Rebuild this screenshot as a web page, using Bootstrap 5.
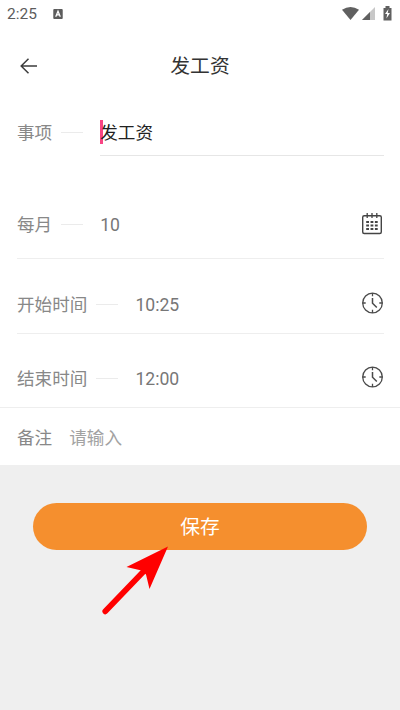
<!DOCTYPE html>
<html lang="zh-CN">
<head>
<meta charset="utf-8">
<meta name="viewport" content="width=device-width, initial-scale=1">
<title>发工资</title>
<link href="https://cdn.jsdelivr.net/npm/bootstrap@5.3.0/dist/css/bootstrap.min.css" rel="stylesheet">
<style>
body{font-family:Roboto,"Noto Sans CJK SC",sans-serif;font-size:17.6px;line-height:26px;color:#777;background:#efefef;height:710px;overflow:hidden}
.status-bar{height:28px;font-size:15.5px;color:#5c5c5c;padding:0 7px}
.title-bar{height:76px;padding:0 20px}
.title-bar h1{font-size:19.8px;line-height:28px;color:#333;padding-top:2px}
.form-line{padding:0 16px 0 17px;border-bottom:1px solid #eee}
.field-name{color:#888}
.field-name,.field-value,.hint{padding-top:2px}
.dash{width:22px;height:1px;background:#ebebeb;margin:0 17px 0 9px}
.row-event{height:86px;padding:5px 16px 0 17px}
.event-label{height:46px}
.event-input{height:47px;border-bottom:1px solid #e6e6e6;color:#222}
.caret{width:2.5px;height:24px;background:#f94585;margin-right:-2.5px}
.row-month{height:69px;margin:0 16px 0 17px;padding:0}
.row-start{height:75px;margin:0 16px 0 17px;padding:16px 0 0}
.row-end{height:74px;padding-top:15px}
.clock-icon{margin-bottom:2px}
.row-note{height:57px;padding:0 17px}
.hint{color:#a2a2a2;margin-left:17px}
.save-area{padding:38px 33px 0}
.btn-save{--bs-btn-bg:#f58f2e;--bs-btn-color:#fff;--bs-btn-hover-bg:#e98220;--bs-btn-hover-color:#fff;height:47px;font-size:19.8px;line-height:28px;border:0;padding:2px 0 0}
.pointer{left:102px;top:545px}
</style>
<script src="https://cdn.jsdelivr.net/npm/bootstrap@5.3.0/dist/js/bootstrap.bundle.min.js" defer></script>
</head>
<body>
<svg class="d-none">
<symbol id="clock" viewBox="0 0 22 22"><g fill="none" stroke="#4a4a4a" stroke-width="1.3"><circle cx="11" cy="11" r="9.8"/><path d="M11 1v3.2M11 17.8v3.2M1 11h3.2M17.8 11h3.2"/><path d="M11 6v5.2l4.3 4.3" stroke-width="1.5"/></g></symbol>
</svg>
<main class="bg-white">
<div class="status-bar d-flex align-items-center">
<span>2:25</span>
<svg class="ms-3" width="10" height="12" viewBox="0 0 11 12"><rect x=".3" y=".5" width="10.4" height="11" rx="1" fill="#5c5c5c"/><path d="M3 9l2.5-6L8 9M4 7h3" fill="none" stroke="#fff" stroke-width="1.4"/></svg>
<svg class="ms-auto" width="51" height="16" viewBox="0 0 51 16"><path d="M0 3.7Q8.5-1.9 17 3.7L8.5 14z" fill="#606060"/><path d="M33 1v13H20z" fill="#c8c8c8"/><path d="M28 6V14H20z" fill="#606060"/><path d="M41.5 2h2V0h4v2h2v12.5h-8z" fill="#606060"/><path d="M46.5 3l-3.5 5h2.2l-.8 4.5L48 7h-2.3z" fill="#fff"/></svg>
</div>
<header class="title-bar d-flex align-items-center position-relative">
<svg width="18" height="16" viewBox="0 0 18 16" fill="none" stroke="#3c3c3c" stroke-width="1.5"><path d="M8.5.8L1.2 8l7.3 7.2M1.2 8H17"/></svg>
<h1 class="position-absolute start-0 end-0 text-center fw-normal m-0">发工资</h1>
</header>
<div class="row-event d-flex">
<div class="event-label d-flex align-items-center"><span class="field-name">事项</span><span class="dash"></span></div>
<div class="event-input d-flex align-items-center flex-grow-1"><span class="caret"></span><span class="field-value">发工资</span></div>
</div>
<div class="form-line row-month d-flex align-items-center">
<span class="field-name">每月</span><span class="dash"></span><span class="field-value">10</span>
<svg class="ms-auto" width="24" height="22" viewBox="0 0 24 22"><rect x="2.7" y="2.7" width="18.6" height="17.8" rx="1.5" fill="none" stroke="#444" stroke-width="1.4"/><path d="M7.2 0v5M12 0v5M16.8 0v5" stroke="#444" stroke-width="1.3"/><path d="M6.2 9h11.5M6.2 12.5h11.5M6.2 16h11.5" stroke="#444" stroke-width="2.2" stroke-dasharray="2.8 1.55"/></svg>
</div>
<div class="form-line row-start d-flex align-items-center">
<span class="field-name">开始时间</span><span class="dash"></span><span class="field-value">10:25</span>
<svg class="clock-icon ms-auto" width="23" height="22"><use href="#clock"/></svg>
</div>
<div class="form-line row-end d-flex align-items-center">
<span class="field-name">结束时间</span><span class="dash"></span><span class="field-value">12:00</span>
<svg class="clock-icon ms-auto" width="23" height="22"><use href="#clock"/></svg>
</div>
<div class="row-note d-flex align-items-center"><span class="field-name">备注</span><span class="hint">请输入</span></div>
</main>
<div class="save-area"><button type="button" class="btn btn-save rounded-pill w-100">保存</button></div>
<svg class="pointer position-absolute" width="68" height="72" viewBox="0 0 68 72"><path d="M3.3 66.3L42 26" stroke="#f00" stroke-width="5.8" stroke-linecap="round"/><path d="M66 1.5L24.5 22 39.5 25.5 44 29.5 47.5 44z" fill="#f00"/></svg>
</body>
</html>
